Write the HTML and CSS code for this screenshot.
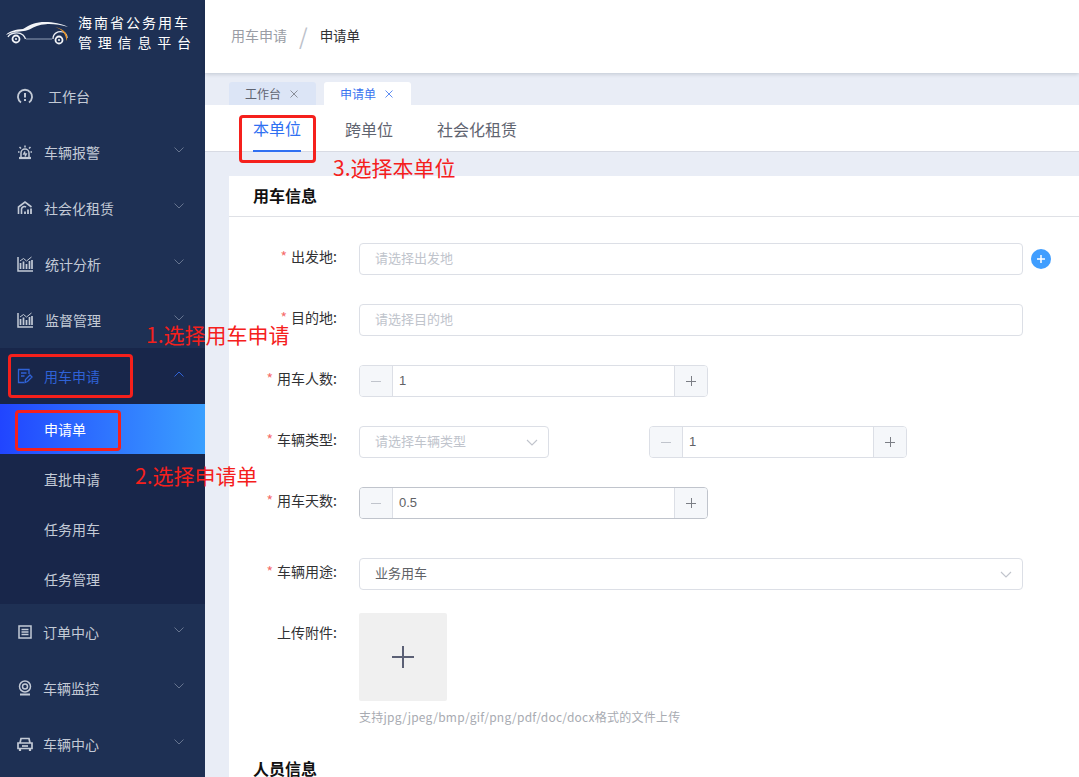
FILE: index.html
```html
<!DOCTYPE html>
<html lang="zh-CN">
<head>
<meta charset="utf-8">
<title>用车申请</title>
<link rel="stylesheet" href="styles.css">
</head>
<body>
<div class="app">
  <aside class="sidebar">
    <div class="brand">
      <svg class="brand-logo" width="64" height="28" viewBox="0 0 64 28" fill="none">
        <path d="M0 15C3 11 10 9.500 17 9C24 4.500 30 2 39 2C47 2 56 3.500 62 7C55 4.800 47 3.800 40 4.200C33 4.700 28 6.500 24 9.300C21 11 15 11.500 10 11.800C6 12.200 3 13.500 0 15Z" fill="#f2f4f8"/>
        <path d="M2 17C4 12.500 13 11.500 17 15C18 16 19 17.500 19.500 19M47 19C47 13.500 52 10.500 57 12C60 13 61 15.500 61 18" stroke="#e8ecf3" stroke-width="1.300"/>
        <path d="M20 19H46" stroke="#8f9db5" stroke-width="1"/>
        <path d="M49 7C56 9 60 14 60.500 21C63 15 59 9 49 7Z" fill="#e8952a"/>
        <circle cx="10" cy="19" r="3.500" stroke="#f2f4f8" stroke-width="1.800"/>
        <circle cx="53" cy="20" r="3.500" stroke="#f2f4f8" stroke-width="1.800"/>
        <circle cx="10" cy="19" r="1" fill="#f2f4f8"/>
        <circle cx="53" cy="20" r="1" fill="#f2f4f8"/>
      </svg>
      <div class="brand-text">
        <div class="brand-line1">海南省公务用车</div>
        <div class="brand-line2">管理信息平台</div>
      </div>
    </div>
    <nav>
      <a class="menu-item gap-wide">
        <svg class="menu-icon" viewBox="0 0 16 16" fill="none" stroke="currentColor" stroke-width="1.800"><path d="M4 14.500A7 7 0 1 1 12 14.500"/><path d="M8 5V9.500M8 11V13" stroke-width="2"/></svg>
        <span>工作台</span>
      </a>
      <a class="menu-item">
        <svg class="menu-icon" viewBox="0 0 16 16" fill="none" stroke="currentColor" stroke-width="1.500"><path d="M4 13V9A4 4 0 0 1 12 9V13"/><path d="M2 14H14" stroke-width="2.200"/><path d="M8 1.500V3.500M2.500 3L4 4.500M13.500 3L12 4.500M1 8H2.500M13.500 8H15"/><path d="M8 7.500L6.800 10H9.200L8 12.500"/></svg>
        <span>车辆报警</span>
        <svg class="chevron" viewBox="0 0 10 6" fill="none" stroke="currentColor"><path d="M.5 .5L5 5L9.500 .5"/></svg>
      </a>
      <a class="menu-item">
        <svg class="menu-icon" viewBox="0 0 16 16" fill="none" stroke="currentColor" stroke-width="1.600"><path d="M1.500 14V7L8 2L14.500 7"/><path d="M4.500 14V9A3 3 0 0 1 9 7"/><path d="M8 14V11.500M11 14V9.500M14 14V8.500" stroke-width="1.800"/></svg>
        <span>社会化租赁</span>
        <svg class="chevron" viewBox="0 0 10 6" fill="none" stroke="currentColor"><path d="M.5 .5L5 5L9.500 .5"/></svg>
      </a>
      <a class="menu-item gap-one">
        <svg class="menu-icon" viewBox="0 0 16 16" fill="none" stroke="currentColor" stroke-width="1.500"><path d="M1 1V15H16" /><path d="M3.500 13V7M6.500 13V5.500M9.500 13V8M12.500 13V5M15 13V4" stroke-width="1.700"/><path d="M3 5L6.500 2.500L9.500 5L14.500 1" stroke-width="1"/></svg>
        <span>统计分析</span>
        <svg class="chevron" viewBox="0 0 10 6" fill="none" stroke="currentColor"><path d="M.5 .5L5 5L9.500 .5"/></svg>
      </a>
      <a class="menu-item gap-one">
        <svg class="menu-icon" viewBox="0 0 16 16" fill="none" stroke="currentColor" stroke-width="1.500"><path d="M1 1V15H16" /><path d="M3.500 13V7M6.500 13V5.500M9.500 13V8M12.500 13V5M15 13V4" stroke-width="1.700"/><path d="M3 5L6.500 2.500L9.500 5L14.500 1" stroke-width="1"/></svg>
        <span>监督管理</span>
        <svg class="chevron" viewBox="0 0 10 6" fill="none" stroke="currentColor"><path d="M.5 .5L5 5L9.500 .5"/></svg>
      </a>
      <a class="menu-item menu-open">
        <svg class="menu-icon" viewBox="0 0 16 16" fill="none" stroke="currentColor" stroke-width="1.300"><path d="M12 6V1.500H1.500V14.500H7"/><path d="M4 5H9.500M4 8H7.500"/><path d="M8 14.500L8.500 11.500L13 7L15 9L10.500 13.500Z"/></svg>
        <span>用车申请</span>
        <svg class="chevron" viewBox="0 0 10 6" fill="none" stroke="currentColor"><path d="M.5 5.500L5 1L9.500 5.500"/></svg>
      </a>
      <div class="submenu">
        <a class="sub-item sub-active">申请单</a>
        <a class="sub-item">直批申请</a>
        <a class="sub-item">任务用车</a>
        <a class="sub-item">任务管理</a>
      </div>
      <a class="menu-item gap-minus">
        <svg class="menu-icon" viewBox="0 0 16 16" fill="none" stroke="currentColor" stroke-width="1.500"><rect x="2" y="2" width="12" height="12"/><path d="M4.500 5.500H11.500M4.500 8H11.500M4.500 10.500H11.500"/></svg>
        <span>订单中心</span>
        <svg class="chevron" viewBox="0 0 10 6" fill="none" stroke="currentColor"><path d="M.5 .5L5 5L9.500 .5"/></svg>
      </a>
      <a class="menu-item gap-minus">
        <svg class="menu-icon" viewBox="0 0 16 16" fill="none" stroke="currentColor" stroke-width="1.500"><circle cx="8" cy="6.500" r="5.500"/><circle cx="8" cy="6.500" r="2.500"/><path d="M3 14.500H13" stroke-width="2"/></svg>
        <span>车辆监控</span>
        <svg class="chevron" viewBox="0 0 10 6" fill="none" stroke="currentColor"><path d="M.5 .5L5 5L9.500 .5"/></svg>
      </a>
      <a class="menu-item gap-minus">
        <svg class="menu-icon" viewBox="0 0 16 16" fill="none" stroke="currentColor" stroke-width="1.700"><path d="M3 7L4 2.500H12L13 7"/><path d="M1 7H15V12.500H1Z"/><path d="M3 13V15M13 13V15" stroke-width="2.200"/><path d="M5 10H11"/></svg>
        <span>车辆中心</span>
        <svg class="chevron" viewBox="0 0 10 6" fill="none" stroke="currentColor"><path d="M.5 .5L5 5L9.500 .5"/></svg>
      </a>
    </nav>
  </aside>

  <main class="main">
    <header class="topbar">
      <span class="crumb">用车申请</span>
      <span class="crumb-sep">/</span>
      <span class="crumb-current">申请单</span>
    </header>
    <div class="tagbar">
      <div class="tag"><span>工作台</span><svg class="tag-close" viewBox="0 0 8 8" fill="none" stroke="currentColor"><path d="M.5 .5L7.500 7.500M7.500 .5L.5 7.500"/></svg></div>
      <div class="tag tag-active"><span>申请单</span><svg class="tag-close" viewBox="0 0 8 8" fill="none" stroke="currentColor"><path d="M.5 .5L7.500 7.500M7.500 .5L.5 7.500"/></svg></div>
    </div>
    <div class="scopes">
      <div class="scope scope-active">本单位</div>
      <div class="scope">跨单位</div>
      <div class="scope">社会化租赁</div>
    </div>
    <div class="content">
      <section class="card">
        <h2 class="card-title">用车信息</h2>
        <div class="form">
          <div class="field">
            <label class="label req">出发地:</label>
            <div class="input input-full placeholder">请选择出发地</div>
            <span class="add-btn">
              <svg width="10" height="10" viewBox="0 0 10 10" stroke="#fff" stroke-width="1.500"><path d="M5 1V9M1 5H9"/></svg>
            </span>
          </div>
          <div class="field">
            <label class="label req">目的地:</label>
            <div class="input input-full placeholder">请选择目的地</div>
          </div>
          <div class="field">
            <label class="label req">用车人数:</label>
            <div class="counter counter-wide">
              <span class="step step-minus"><svg class="step-icon" viewBox="0 0 10 10" stroke="currentColor"><path d="M0 5.500H10"/></svg></span><span class="count">1</span><span class="step step-plus"><svg class="step-icon" viewBox="0 0 10 10" stroke="currentColor"><path d="M0 5.500H10M5.500 0V10"/></svg></span>
            </div>
          </div>
          <div class="field">
            <label class="label req">车辆类型:</label>
            <div class="input input-select placeholder">请选择车辆类型
              <svg class="select-arrow" viewBox="0 0 12 7" fill="none" stroke="#c0c4cc" stroke-width="1.100"><path d="M1 1L6 6L11 1"/></svg>
            </div>
            <div class="counter counter-narrow">
              <span class="step step-minus"><svg class="step-icon" viewBox="0 0 10 10" stroke="currentColor"><path d="M0 5.500H10"/></svg></span><span class="count">1</span><span class="step step-plus"><svg class="step-icon" viewBox="0 0 10 10" stroke="currentColor"><path d="M0 5.500H10M5.500 0V10"/></svg></span>
            </div>
          </div>
          <div class="field field-last">
            <label class="label req">用车天数:</label>
            <div class="counter counter-wide counter-focus">
              <span class="step step-minus"><svg class="step-icon" viewBox="0 0 10 10" stroke="currentColor"><path d="M0 5.500H10"/></svg></span><span class="count">0.5</span><span class="step step-plus"><svg class="step-icon" viewBox="0 0 10 10" stroke="currentColor"><path d="M0 5.500H10M5.500 0V10"/></svg></span>
            </div>
          </div>
          <div class="field field-purpose">
            <label class="label req">车辆用途:</label>
            <div class="input input-full value">业务用车
              <svg class="select-arrow" viewBox="0 0 12 7" fill="none" stroke="#c0c4cc" stroke-width="1.100"><path d="M1 1L6 6L11 1"/></svg>
            </div>
          </div>
          <div class="field field-upload">
            <label class="label label-upload">上传附件:</label>
            <div>
              <div class="upload">
                <svg width="24" height="24" viewBox="0 0 24 24" stroke="#5b6075" stroke-width="2"><path d="M12 1V23M1 12H23"/></svg>
              </div>
              <p class="hint">支持jpg/jpeg/bmp/gif/png/pdf/doc/docx格式的文件上传</p>
            </div>
          </div>
        </div>
        <h2 class="people-title">人员信息</h2>
      </section>
    </div>
  </main>
</div>

<div class="note-box note-box-1"></div>
<div class="note-box note-box-2"></div>
<div class="note-box note-box-3"></div>
<div class="note note-1">1.选择用车申请</div>
<div class="note note-2">2.选择申请单</div>
<div class="note note-3">3.选择本单位</div>
</body>
</html>
```

FILE: styles.css
```css
* { box-sizing: border-box; }
html, body { margin: 0; height: 100%; overflow: hidden; }
body {
  font-family: "Noto Sans CJK SC", "Liberation Sans", sans-serif;
  font-size: 13px;
  color: #303133;
  background: #e9edf6;
}
.app { display: flex; height: 777px; overflow: hidden; }

/* sidebar */
.sidebar { width: 205px; flex: none; background: #1e3054; overflow: hidden; }
.brand { height: 68px; display: flex; padding: 12px 0 0 6px; }
.brand-logo { margin-top: 8px; flex: none; }
.brand-text { margin-left: 8px; color: #fff; font-size: 14px; line-height: 20px; }
.brand-line1 { letter-spacing: 2px; white-space: nowrap; }
.brand-line2 { letter-spacing: 5.800px; white-space: nowrap; }
.menu-item {
  display: flex;
  align-items: center;
  height: 56px;
  padding-left: 17px;
  color: #c3cad6;
  font-size: 14px;
  position: relative;
}
.menu-icon { width: 16px; height: 16px; flex: none; margin-right: 11px; }
.gap-wide { padding-bottom: 1px; }
.gap-wide .menu-icon { margin-right: 15px; }
.gap-one .menu-icon { margin-right: 12px; }
.gap-minus .menu-icon { margin-right: 10px; }
.chevron {
  width: 10px; height: 6px;
  color: #66748f;
  margin-left: auto;
  margin-right: 21px;
  margin-top: -5px;
}
.menu-open { background: #18264a; color: #2f62d6; }
.menu-open .chevron { color: #2f62d6; }
.submenu { background: #18264a; }
.sub-item {
  display: flex;
  align-items: center;
  height: 50px;
  padding-left: 44px;
  color: #c3cad6;
  font-size: 14px;
}
.sub-active { color: #fff; background: linear-gradient(90deg, #2145ff, #3ba0ff); }

/* main */
.main { flex: 1; min-width: 0; display: flex; flex-direction: column; }
.topbar {
  height: 73px;
  flex: none;
  background: #fff;
  box-shadow: 0 1px 4px rgba(0, 21, 41, .18);
  display: flex;
  align-items: center;
  padding: 0 0 3px 26px;
  position: relative;
}
.crumb { font-size: 14px; color: #9a9da5; }
.crumb-sep { font-size: 22px; color: #bcc1ca; margin: 0 12px; }
.crumb-current { font-size: 13.500px; color: #303133; }
.tagbar { height: 32px; flex: none; display: flex; align-items: flex-end; gap: 8px; padding-left: 24px; }
.tag {
  width: 87px;
  height: 23px;
  background: #dce5f6;
  border-radius: 3px 3px 0 0;
  font-size: 12px;
  color: #5f6470;
  display: flex;
  align-items: center;
  padding-left: 16px;
  gap: 9px;
}
.tag-active { background: #fff; color: #3a74f0; }
.tag-close { width: 8px; height: 8px; color: #8a8f99; }
.tag-active .tag-close { color: #5f8ef2; }
.scopes {
  height: 47px;
  flex: none;
  background: #fff;
  border-bottom: 1px solid #d8dbe4;
  display: flex;
  gap: 44px;
  padding-left: 48px;
}
.scope {
  height: 47px;
  font-size: 16px;
  color: #5f6470;
  display: flex;
  align-items: center;
}
.scope-active { color: #2f70f2; border-bottom: 2px solid #2f70f2; }
.content { flex: 1; padding: 24px 0 0 24px; overflow: hidden; }
.card { background: #fff; height: 100%; }
.card-title {
  margin: 0;
  height: 41px;
  padding-left: 24px;
  border-bottom: 1px solid #dfe1e6;
  font-size: 16px;
  font-weight: 700;
  line-height: 38px;
  color: #111;
}

/* form */
.form { padding-top: 26px; }
.field { display: flex; margin-bottom: 29px; }
.field-last { margin-bottom: 39px; }
.field-purpose { margin-bottom: 23px; }
.field-upload { margin-bottom: 0; }
.label {
  width: 110px;
  margin-right: 20px;
  padding-right: 2px;
  flex: none;
  text-align: right;
  line-height: 27px;
  font-size: 14px;
  color: #303133;
}
.label-upload { line-height: 38px; }
.req::before { content: "*"; color: #f56c6c; margin-right: 4px; }
.input {
  height: 32px;
  border: 1px solid #dcdfe6;
  border-radius: 4px;
  padding: 0 15px;
  line-height: 27px;
  background: #fff;
  position: relative;
}
.input-full { width: 664px; }
.input-select { width: 190px; margin-right: 100px; }
.placeholder { color: #c0c4cc; }
.value { color: #606266; }
.select-arrow { position: absolute; right: 10px; top: 12px; width: 12px; height: 7px; }
.add-btn {
  width: 20px;
  height: 20px;
  border-radius: 50%;
  background: #409eff;
  margin: 6px 0 0 8px;
  display: flex;
  align-items: center;
  justify-content: center;
}
.counter {
  height: 32px;
  border: 1px solid #dcdfe6;
  border-radius: 4px;
  display: flex;
  overflow: hidden;
  background: #fff;
}
.counter-wide { width: 349px; }
.counter-narrow { width: 258px; }
.counter-focus { border-color: #c0c4cc; }
.step {
  width: 33px;
  flex: none;
  background: #f5f7fa;
  display: flex;
  align-items: center;
  justify-content: center;
}
.step-icon { width: 10px; height: 10px; }
.step-minus { color: #c0c4cc; border-right: 1px solid #dcdfe6; }
.step-plus { color: #7b7e85; border-left: 1px solid #dcdfe6; }
.count {
  flex: 1;
  padding-left: 6px;
  line-height: 30px;
  font-family: "Liberation Sans", sans-serif;
  font-size: 13px;
  color: #606266;
}
.upload {
  width: 88px;
  height: 88px;
  background: #f0f0f0;
  border-radius: 2px;
  display: flex;
  align-items: center;
  justify-content: center;
}
.hint {
  margin: 6px 0 0;
  font-size: 12px;
  line-height: 20px;
  letter-spacing: .24px;
  color: #a8abb2;
  white-space: nowrap;
}
.people-title {
  margin: 29px 0 0 24px;
  font-size: 16px;
  font-weight: 700;
  line-height: 24px;
  color: #111;
}

/* annotations drawn over the screenshot */
.note-box { position: absolute; border: 3px solid #f5201c; border-radius: 4px; }
.note-box-1 { left: 8px; top: 354px; width: 125px; height: 44px; }
.note-box-2 { left: 15px; top: 410px; width: 106px; height: 41px; }
.note-box-3 { left: 239px; top: 115px; width: 77px; height: 48px; }
.note { position: absolute; color: #f5201c; font-size: 21px; line-height: 28px; white-space: nowrap; font-family: "Noto Sans CJK SC", sans-serif; }
.note-1 { left: 146px; top: 320px; }
.note-2 { left: 135px; top: 461px; }
.note-3 { left: 333px; top: 153px; }
```
